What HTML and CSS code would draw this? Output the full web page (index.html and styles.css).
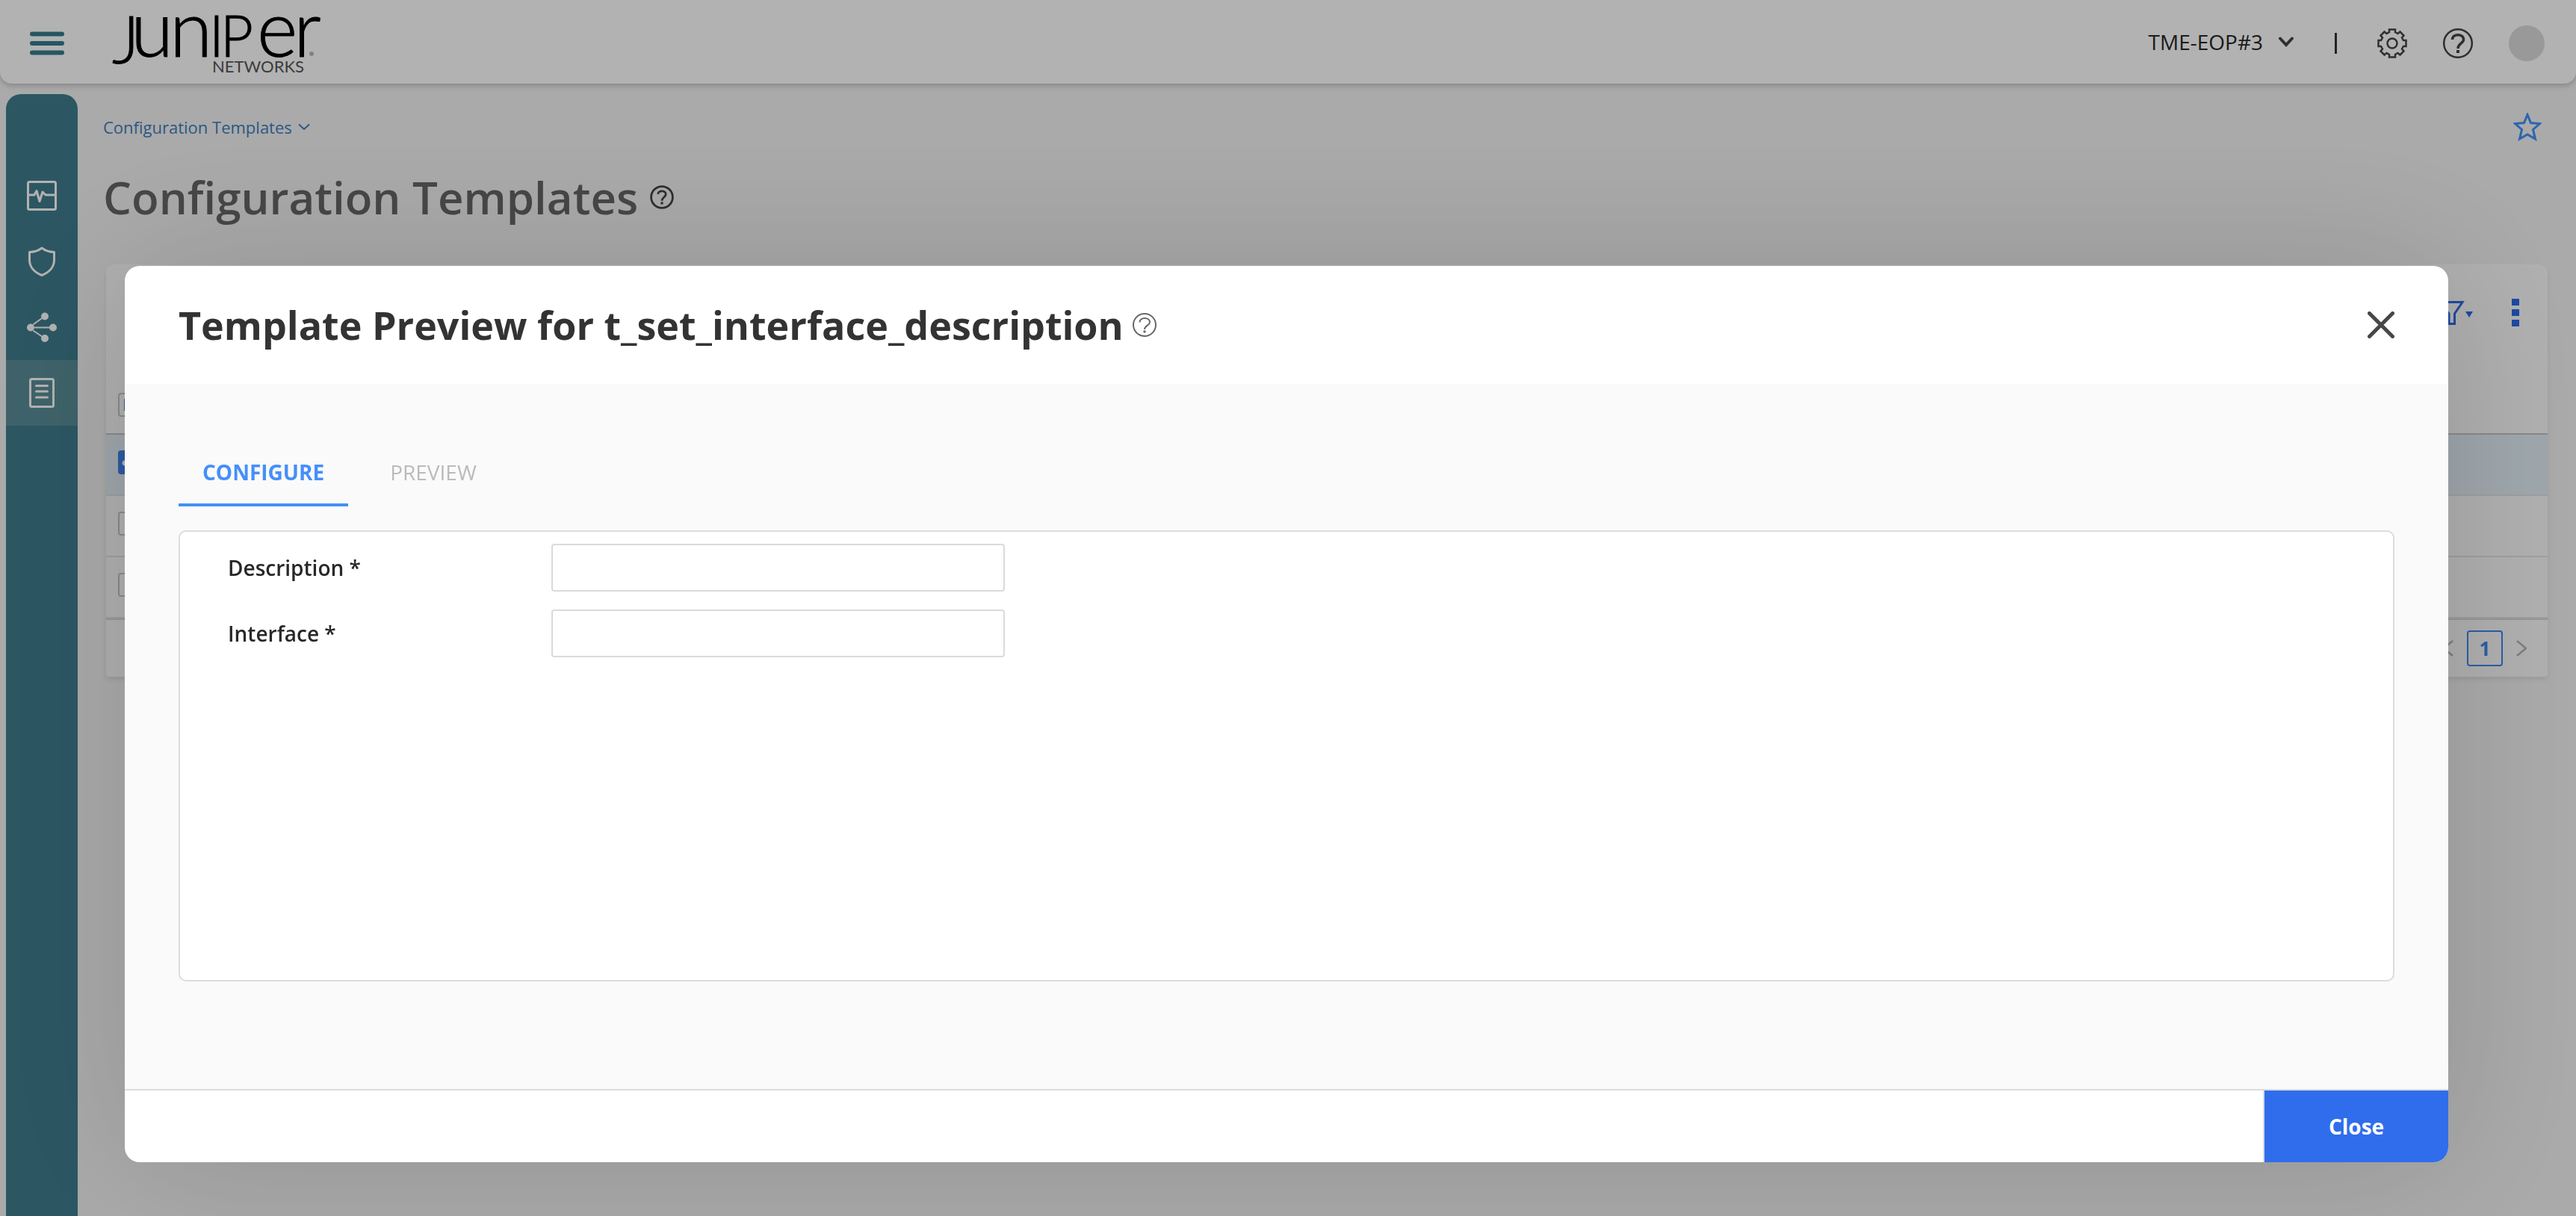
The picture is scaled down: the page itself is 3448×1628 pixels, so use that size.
FILE: index.html
```html
<!DOCTYPE html>
<html lang="en">
<head>
<meta charset="utf-8">
<title>Configuration Templates</title>
<link rel="stylesheet" href="styles.css">
</head>
<body>
<div class="app">
  <header class="topbar">
    <button class="icon-btn menu-btn" type="button" aria-label="Menu">
      <svg width="46" height="32" viewBox="0 0 46 32"><path d="M3 3.5H43M3 16H43M3 28.5H43"/></svg>
    </button>
    <svg class="logo" width="280" height="84" viewBox="0 0 280 84" role="img" aria-label="Juniper Networks">
      <g class="logo-name">
        <text class="logo-j" x="0" y="69">J</text>
        <text class="logo-low" x="25" y="60">u</text>
        <text class="logo-low" x="77" y="60">n</text>
        <text class="logo-cap" x="130" y="60">I</text>
        <text class="logo-cap" x="145" y="60">P</text>
        <text class="logo-low" x="194" y="60">e</text>
        <text class="logo-low" x="243" y="60">r</text>
      </g>
      <text class="logo-sub" x="134" y="81">NETWORKS</text>
      <circle cx="267" cy="56" r="3" fill="#bbb"/>
    </svg>
    <div class="topbar-tools">
      <button class="org" type="button">TME-EOP#3
        <svg width="22" height="16" viewBox="0 0 22 16"><path d="M3 3.500L11 12L19 3.500"/></svg>
      </button>
      <span class="divider"></span>
      <button class="icon-btn" type="button" aria-label="Settings">
        <svg width="40" height="40" viewBox="-20 -20 40 40"><path class="line" d="M-4-18.500H4V-15L7.500-13L10.500-15.500L15.500-10.500L13-7.500L15-4H18.500V4H15L13 7.500L15.500 10.500L10.500 15.500L7.500 13L4 15V18.500H-4V15L-7.500 13L-10.500 15.500L-15.500 10.500L-13 7.500L-15 4H-18.500V-4H-15L-13-7.500L-15.500-10.500L-10.500-15.500L-7.500-13L-4-15Z"/><circle class="line" r="6.500"/></svg>
      </button>
      <button class="icon-btn" type="button" aria-label="Help">
        <svg width="40" height="40" viewBox="0 0 40 40"><circle class="line" cx="20" cy="20" r="18.800"/><path class="line bold" d="M12.500 15C12.500 6.500 27.500 6.500 27.500 15C27.500 20 20 20 20 27"/><path class="fill" d="M18 29h4v4h-4z"/></svg>
      </button>
      <span class="avatar"></span>
    </div>
  </header>

  <div class="shell">
    <nav class="sidebar" aria-label="Main">
      <a href="#monitor" aria-label="Monitor"><svg width="40" height="40" viewBox="0 0 40 40"><rect x="1.500" y="1.500" width="37" height="37" rx="2"/><path d="M2 19H10L13 13.500L17 27.500L21 15L25 19H38"/></svg></a>
      <a href="#security" aria-label="Security"><svg width="40" height="40" viewBox="0 0 40 40"><path d="M20 2C15.500 5.500 10 7.500 3.500 7.500V18C3.500 28 11 35 20 38.500C29 35 36.500 28 36.500 18V7.500C30 7.500 24.500 5.500 20 2Z"/></svg></a>
      <a href="#network" aria-label="Network"><svg width="40" height="40" viewBox="0 0 40 40"><path class="thin" d="M9 16L19.500 8.500M11 20.500H30M9 25L19.500 32"/><g class="dot"><circle cx="5" cy="20.500" r="5"/><circle cx="24" cy="5.500" r="5"/><circle cx="35" cy="20.500" r="5"/><circle cx="24" cy="35" r="5"/></g></svg></a>
      <a class="active" href="#templates" aria-label="Templates"><svg width="40" height="40" viewBox="0 0 40 40"><rect x="4.500" y="1.500" width="31" height="37" rx="2"/><path d="M12.500 10.500H27.500M12.500 18H27.500M12.500 26H27.500"/></svg></a>
    </nav>

    <main class="page">
      <div class="crumbs">
        <a href="#templates">Configuration Templates
          <svg width="16" height="10" viewBox="0 0 16 10"><path d="M1 1.500L8 8L15 1.500"/></svg>
        </a>
        <button class="icon-btn star" type="button" aria-label="Favorite">
          <svg width="38" height="38" viewBox="0 0 38 38"><path d="M19 2.500L23.500 13.500L35.500 14.500L26.500 22.500L29.500 35L19 29L8.500 35L11.500 22.500L2.500 14.500L14.500 13.500Z"/></svg>
        </button>
      </div>
      <div class="page-title">
        <h1>Configuration Templates</h1>
        <svg width="32" height="32" viewBox="0 0 40 40"><circle class="line bold" cx="20" cy="20" r="18"/><path class="line bold" d="M13.500 15C13.500 8 26.500 8 26.500 15C26.500 20 20 20 20 26"/><path class="fill" d="M18 28h4v4h-4z"/></svg>
      </div>

      <section class="card">
        <div class="toolbar">
          <button class="icon-btn" type="button" aria-label="Filter">
            <svg width="46" height="32" viewBox="0 0 46 32"><path class="blue-line" d="M2.500 1.500H32L21.500 17V30.500H14V17Z"/><path class="blue-fill" d="M36 14H46L41 22Z"/></svg>
          </button>
          <button class="icon-btn" type="button" aria-label="More">
            <svg width="10" height="38" viewBox="0 0 10 38"><path class="blue-fill" d="M0 0h10v9H0zM0 14h10v9H0zM0 28h10v9H0z"/></svg>
          </button>
        </div>
        <table class="grid">
          <thead><tr><th><input type="checkbox" class="some" aria-label="Select all"></th></tr></thead>
          <tbody>
            <tr class="selected"><td><input type="checkbox" checked aria-label="Select row 1"></td></tr>
            <tr><td><input type="checkbox" aria-label="Select row 2"></td></tr>
            <tr><td><input type="checkbox" aria-label="Select row 3"></td></tr>
          </tbody>
        </table>
        <div class="pager">
          <button class="icon-btn" type="button" aria-label="Previous page"><svg width="14" height="22" viewBox="0 0 14 22"><path d="M13 1L1 11L13 21"/></svg></button>
          <button class="page-no" type="button">1</button>
          <button class="icon-btn" type="button" aria-label="Next page"><svg width="14" height="22" viewBox="0 0 14 22"><path d="M1 1L13 11L1 21"/></svg></button>
        </div>
      </section>
    </main>
  </div>
</div>

<div class="overlay">
  <section class="modal" role="dialog" aria-modal="true" aria-labelledby="modal-title">
    <header class="modal-head">
      <h2 id="modal-title">Template Preview for t_set_interface_description</h2>
      <svg class="hint" width="32" height="32" viewBox="0 0 32 32"><circle cx="16" cy="16" r="15"/><path d="M9.500 12.500C9.500 5 23 5 23 12.500C23 16.500 16 17 16 22"/><path class="hint-dot" d="M14.500 23.500h3v3h-3z"/></svg>
      <button class="icon-btn close-x" type="button" aria-label="Close dialog">
        <svg width="36" height="36" viewBox="0 0 36 36"><path d="M2.500 2.500L33.500 33.500M33.500 2.500L2.500 33.500"/></svg>
      </button>
    </header>
    <div class="modal-body">
      <div class="tabs" role="tablist">
        <button class="tab active" type="button" role="tab" aria-selected="true">CONFIGURE</button>
        <button class="tab" type="button" role="tab" aria-selected="false">PREVIEW</button>
      </div>
      <form class="panel">
        <div class="field"><label for="description">Description *</label><input id="description" type="text"></div>
        <div class="field"><label for="interface">Interface *</label><input id="interface" type="text"></div>
      </form>
    </div>
    <footer class="modal-foot"><button class="close-btn" type="button">Close</button></footer>
  </section>
</div>
</body>
</html>
```
FILE: styles.css
```css
* { box-sizing: border-box; }

body {
  margin: 0;
  background: #f4f4f4;
  color: #282828;
  font-family: "Open Sans", "Noto Sans", sans-serif;
  font-size: 28px;
  line-height: 40px;
}

button { font: inherit; color: inherit; background: none; border: 0; padding: 0; }
h1, h2 { margin: 0; }
svg { display: block; fill: none; flex: none; }

.icon-btn { display: block; flex: none; }
.line { stroke: #444; stroke-width: 2.5; }
.bold { stroke-width: 3.5; }
.fill { fill: #444; }
.blue-line { stroke: #2d6ae9; stroke-width: 3; }
.blue-fill { fill: #2d6ae9; }

.app { display: flex; flex-direction: column; min-height: 100vh; }

/* Top bar */
.topbar {
  display: flex;
  align-items: center;
  height: 112px;
  padding: 4px 42px 0 40px;
  background: #fff;
  border-radius: 0 0 16px 16px;
  box-shadow: 0 2px 8px rgba(0, 0, 0, .25);
}
.menu-btn path { stroke: #347c8d; stroke-width: 6; stroke-linecap: round; }
.logo { margin-left: 64px; overflow: visible; }
.logo text { font-family: Lato, "Open Sans", sans-serif; fill: #000; }
.logo-name text { font-weight: 300; stroke: #000; stroke-width: 1; }
.logo .logo-j { font-size: 88px; }
.logo .logo-low { font-size: 104px; }
.logo .logo-cap { font-size: 76px; }
.logo .logo-sub { font-size: 22px; fill: #555; }
.topbar-tools { display: flex; align-items: center; margin-left: auto; }
.org { display: flex; align-items: center; gap: 20px; padding-bottom: 4px; }
.org svg path { stroke: #444; stroke-width: 4; stroke-linecap: round; }
.divider { width: 3px; height: 28px; margin: 0 54px; background: #333; }
.topbar-tools .icon-btn { margin-right: 48px; }
.avatar { width: 48px; height: 48px; border-radius: 50%; background: #dcdcdc; }

/* Navigation rail */
.shell { display: flex; flex: 1; }
.sidebar {
  flex: none;
  width: 96px;
  margin: 14px 0 0 8px;
  padding-top: 92px;
  background: #3f7d8d;
  border-radius: 20px 20px 0 0;
}
.sidebar a { display: flex; align-items: center; justify-content: center; height: 88px; }
.sidebar a.active { background: #5b8e99; }
.sidebar svg { stroke: #fff; stroke-width: 3; stroke-linecap: round; stroke-linejoin: round; }
.sidebar .thin { stroke-width: 2; }
.sidebar .dot { fill: #fff; stroke: none; }

/* Page */
.page { flex: 1; min-width: 0; padding: 38px 38px 0; }
.crumbs { display: flex; align-items: center; justify-content: space-between; height: 40px; padding-right: 8px; }
.crumbs a { display: flex; align-items: center; gap: 8px; margin-left: -4px; color: #3d7fbb; font-size: 22px; text-decoration: none; }
.crumbs a path { stroke: #3d7fbb; stroke-width: 2; }
.star path { stroke: #3e92fb; stroke-width: 3; }
.page-title { display: flex; align-items: center; gap: 16px; height: 84px; margin: 32px 0 48px -4px; }
.page-title h1 { font-size: 60px; line-height: 84px; font-weight: 600; color: #666; }

.card { background: #fcfcfc; border-radius: 12px 12px 4px 4px; box-shadow: 0 4px 6px rgba(0, 0, 0, .08); }
.toolbar { display: flex; align-items: flex-start; justify-content: flex-end; gap: 52px; height: 150px; padding: 46px 38px 0 0; }
.toolbar .icon-btn:first-child { padding-top: 3px; }
.grid { width: 100%; border-collapse: separate; border-spacing: 0; }
.grid th { height: 78px; padding: 0 16px; border-bottom: 2px solid #c4c4c4; text-align: left; }
.grid td { height: 82px; padding: 0 16px 6px; border-bottom: 2px solid #e4e4e4; }
.grid .selected td { background: #e4f0f8; }
.grid input {
  display: block;
  appearance: none;
  width: 32px;
  height: 32px;
  margin: 0;
  border: 2px solid #c6c6c6;
  border-radius: 4px;
}
.grid input.some { background: #3e82e6 content-box; padding: 6px; }
.grid input:checked { border: 0; background: radial-gradient(circle at 9px 17px, #fff 3px, #3e82e6 4px); }
.pager { display: flex; align-items: center; justify-content: flex-end; gap: 18px; height: 78px; padding-right: 28px; border-top: 2px solid #d8d8d8; }
.pager svg path { stroke: #b4b4b4; stroke-width: 2.5; }
.page-no { width: 48px; height: 48px; border: 2px solid #3e88f0; border-radius: 4px; color: #3e88f0; font-size: 26px; font-weight: 700; }

/* Dialog */
.overlay { position: fixed; inset: 0; padding: 356px 171px 0 167px; background: rgba(0, 0, 0, .3); overflow: hidden; }
.modal { background: #fff; border-radius: 20px; box-shadow: 0 0 200px rgba(0, 0, 0, .16); overflow: hidden; }
.modal-head { display: flex; align-items: center; height: 158px; padding: 0 72px; }
.modal-head h2 { font-size: 52px; line-height: 72px; font-weight: 700; color: #333; }
.hint { margin-left: 12px; stroke: #666; stroke-width: 2; }
.hint-dot { fill: #666; stroke: none; }
.close-x { margin-left: auto; }
.close-x path { stroke: #474747; stroke-width: 5; stroke-linecap: round; }
.modal-body { padding: 80px 72px 144px; background: #fafafa; border-bottom: 2px solid #dcdcdc; }
.tabs { display: flex; gap: 24px; margin-bottom: 32px; }
.tab { height: 84px; padding: 0 32px 4px; border-bottom: 4px solid transparent; color: #bbb; }
.tab.active { border-color: #458ff9; color: #458ff9; font-weight: 700; }
.panel { display: flex; flex-direction: column; gap: 24px; min-height: 604px; padding: 16px 64px; background: #fff; border: 2px solid #dcdcdc; border-radius: 10px; }
.field { display: flex; align-items: center; }
.field label { width: 433px; color: #282828; font-weight: 600; }
.field input { width: 607px; height: 64px; padding: 0 16px; border: 2px solid #dadada; border-radius: 4px; font: inherit; background: #fff; }
.modal-foot { display: flex; justify-content: flex-end; height: 96px; }
.close-btn { width: 248px; border-left: 2px solid #dcdcdc; background: #306dec; background-clip: padding-box; color: #fff; font-weight: 700; }
```
